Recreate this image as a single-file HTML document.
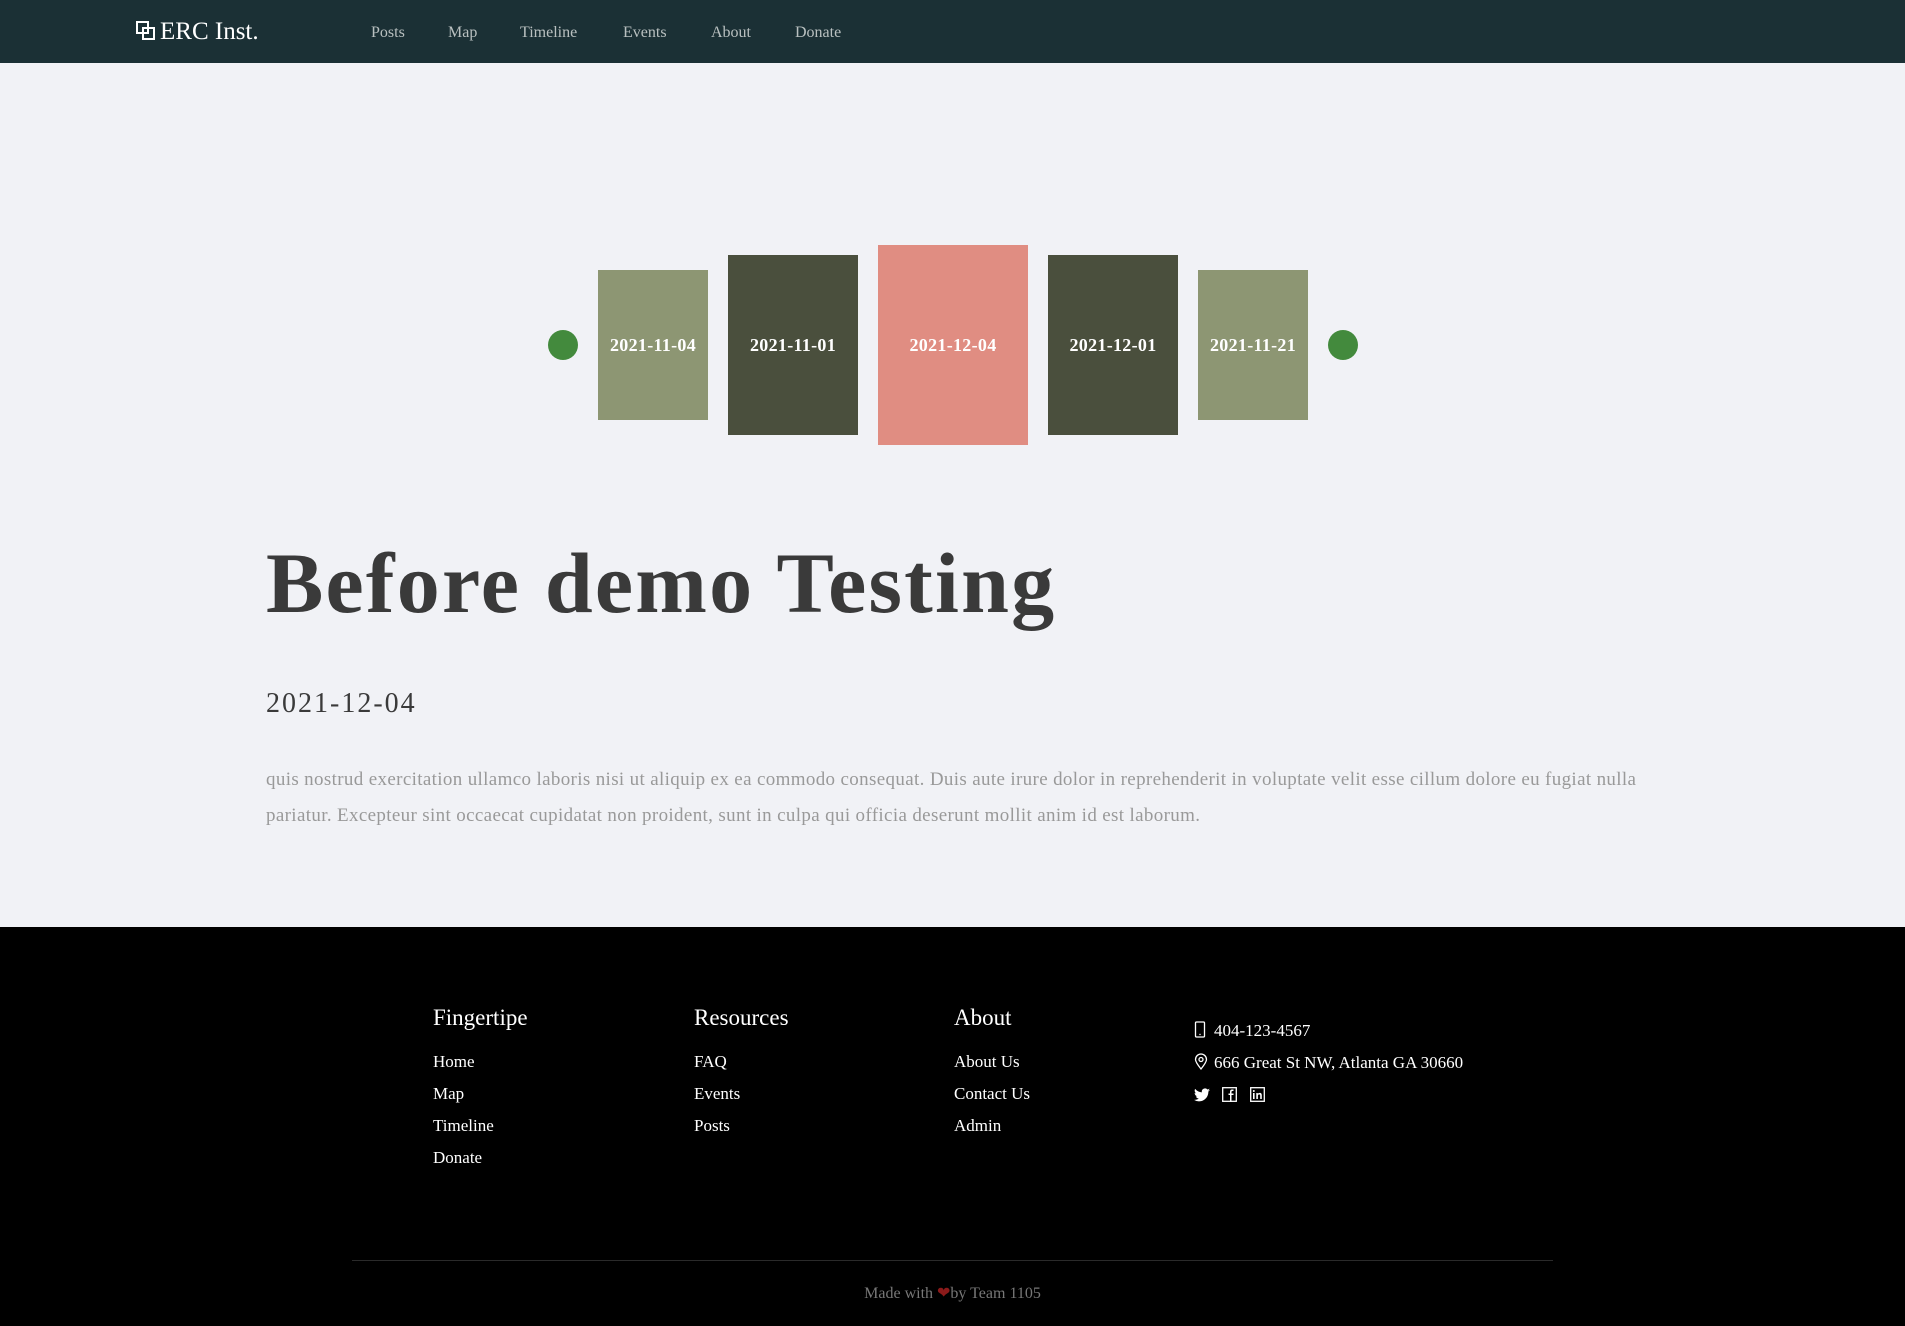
<!DOCTYPE html>
<html><head><meta charset="utf-8"><style>
*{margin:0;padding:0;box-sizing:border-box}
body{width:1905px;height:1326px;background:#f1f2f6;font-family:"Liberation Serif",serif;position:relative;overflow:hidden}
.hdr{position:absolute;left:0;top:0;width:1905px;height:63px;background:#1b3035}
.logo{position:absolute;left:136px;top:17px;color:#fff;font-size:25px;line-height:30px}
.nav a{position:absolute;top:22px;color:#b9c0c0;font-size:16px;text-decoration:none;line-height:22px}
.card{position:absolute;color:#fff;font-weight:bold;font-size:18px;display:flex;align-items:center;justify-content:center;letter-spacing:0.3px}
.dot{position:absolute;width:30px;height:30px;border-radius:50%;background:#438a3d;top:330px}
h1{position:absolute;left:266px;top:528px;font-size:86px;color:#3a3a3a;font-weight:bold;line-height:110px;letter-spacing:2.2px}
.date{position:absolute;left:266px;top:688px;font-size:28px;color:#3a3a3a;letter-spacing:2px}
.p{position:absolute;left:266px;top:762px;width:1380px;font-size:19px;line-height:36px;color:#999;letter-spacing:0.35px}
.ft{position:absolute;left:0;top:927px;width:1905px;height:399px;background:#000;color:#fff}
.col{position:absolute;top:77px}
.col h3{font-size:23px;font-weight:normal;line-height:28px;margin-bottom:14px}
.col div{font-size:17px;line-height:32px}
.hr{position:absolute;left:352px;top:333px;width:1201px;height:1px;background:#2a2a2a}
.made{position:absolute;top:356px;width:1905px;text-align:center;color:#777;font-size:16px}
</style></head><body>
<div class="hdr">
<div class="logo"><svg width="20" height="20" viewBox="0 0 20 20" style="vertical-align:-2px;margin-right:4px"><rect x="1" y="1" width="11" height="11" fill="none" stroke="#fff" stroke-width="2"/><rect x="7" y="7" width="11" height="11" fill="none" stroke="#fff" stroke-width="2"/></svg>ERC Inst.</div>
<div class="nav"><a style="left:371px">Posts</a><a style="left:448px">Map</a><a style="left:520px">Timeline</a><a style="left:623px">Events</a><a style="left:711px">About</a><a style="left:795px">Donate</a></div>
</div>
<div class="dot" style="left:548px"></div>
<div class="card" style="left:598px;top:270px;width:110px;height:150px;background:#8d9673">2021-11-04</div>
<div class="card" style="left:728px;top:255px;width:130px;height:180px;background:#4a4f3d">2021-11-01</div>
<div class="card" style="left:878px;top:245px;width:150px;height:200px;background:#e08d82">2021-12-04</div>
<div class="card" style="left:1048px;top:255px;width:130px;height:180px;background:#4a4f3d">2021-12-01</div>
<div class="card" style="left:1198px;top:270px;width:110px;height:150px;background:#8d9673">2021-11-21</div>
<div class="dot" style="left:1328px"></div>
<h1>Before demo Testing</h1>
<div class="date">2021-12-04</div>
<div class="p">quis nostrud exercitation ullamco laboris nisi ut aliquip ex ea commodo consequat. Duis aute irure dolor in reprehenderit in voluptate velit esse cillum dolore eu fugiat nulla pariatur. Excepteur sint occaecat cupidatat non proident, sunt in culpa qui officia deserunt mollit anim id est laborum.</div>
<div class="ft">
<div class="col" style="left:433px"><h3>Fingertipe</h3><div>Home</div><div>Map</div><div>Timeline</div><div>Donate</div></div>
<div class="col" style="left:694px"><h3>Resources</h3><div>FAQ</div><div>Events</div><div>Posts</div></div>
<div class="col" style="left:954px"><h3>About</h3><div>About Us</div><div>Contact Us</div><div>Admin</div></div>
<div class="col" style="left:1194px;top:88px">
<div><svg width="12" height="17" viewBox="0 0 12 17" style="vertical-align:-2px;margin-right:8px"><rect x="1.5" y="1" width="9" height="15" rx="1" fill="none" stroke="#fff" stroke-width="1.3"/><circle cx="6" cy="13.5" r=".7" fill="#fff"/></svg>404-123-4567</div>
<div><svg width="14" height="17" viewBox="0 0 14 17" style="vertical-align:-2px;margin-right:6px"><path d="M7 16C3 11 1.5 8.5 1.5 6.5a5.5 5.5 0 0111 0C12.5 8.5 11 11 7 16z" fill="none" stroke="#fff" stroke-width="1.3"/><circle cx="7" cy="6.5" r="2" fill="none" stroke="#fff" stroke-width="1.3"/></svg>666 Great St NW, Atlanta GA 30660</div>
<div style="padding-top:2px"><svg width="16" height="14" viewBox="0 0 24 20"><path d="M24 2.4a10 10 0 01-2.8.8A5 5 0 0023.3.5a10 10 0 01-3.1 1.2A4.9 4.9 0 0011.8 6 14 14 0 011.7.9a4.9 4.9 0 001.5 6.6 4.9 4.9 0 01-2.2-.6 4.9 4.9 0 003.9 4.9 5 5 0 01-2.2.1 4.9 4.9 0 004.6 3.4A9.9 9.9 0 010 17.3 14 14 0 007.5 19.5c9.1 0 14-7.5 14-14v-.6A10 10 0 0024 2.4z" fill="#fff"/></svg>
<svg width="15" height="15" viewBox="0 0 15 15" style="margin-left:8px"><rect x=".7" y=".7" width="13.6" height="13.6" fill="none" stroke="#fff" stroke-width="1.3"/><path d="M9.5 15V8h2V6.5h-2V5c0-.6.3-1 1-1h1V2.5H10C8.5 2.5 8 3.5 8 4.8V6.5H6.5V8H8v7" fill="#fff"/></svg>
<svg width="15" height="15" viewBox="0 0 15 15" style="margin-left:8px"><rect x=".7" y=".7" width="13.6" height="13.6" fill="none" stroke="#fff" stroke-width="1.3"/><rect x="3" y="6" width="1.6" height="6" fill="#fff"/><circle cx="3.8" cy="4" r="1" fill="#fff"/><path d="M6.3 6h1.5v1c.4-.7 1.1-1.1 2-1.1 1.5 0 2 1 2 2.5V12h-1.6V8.7c0-.8-.3-1.3-1-1.3s-1.3.5-1.3 1.4V12H6.3z" fill="#fff"/></svg></div>
</div>
<div class="hr"></div>
<div class="made">Made with <span style="color:#8b1a1a">❤</span>by Team 1105</div>
</div>
</body></html>
